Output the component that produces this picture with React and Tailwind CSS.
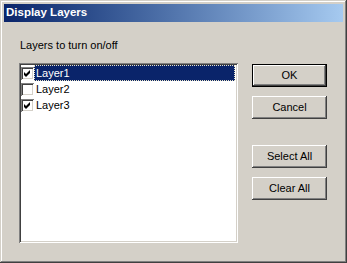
const layers = [
  { name: 'Layer1', checked: true, selected: true },
  { name: 'Layer2', checked: false },
  { name: 'Layer3', checked: true },
]

const raised =
  'shadow-[inset_-1px_-1px_#404040,inset_1px_1px_#ffffff,inset_-2px_-2px_#808080,inset_2px_2px_#d4d0c8]'

const Check = ({ checked }) => (
  <div className="w-[13px] h-[13px] shrink-0 bg-white shadow-[inset_1px_1px_#808080,inset_-1px_-1px_#ffffff,inset_2px_2px_#404040,inset_-2px_-2px_#d4d0c8]">
    {checked && (
      <svg width="13" height="13" viewBox="0 0 13 13" className="block">
        <path d="M3 5 L5 7 L9 3 L9 6 L5 10 L3 8 Z" fill="#000" />
      </svg>
    )}
  </div>
)

const Button = ({ label, isDefault, className = '' }) => (
  <button
    className={`block w-[75px] h-[23px] bg-[#d4d0c8] text-[11px] leading-none text-black ${
      isDefault ? 'border border-black' : ''
    } ${className}`}
  >
    <span className={`flex items-center justify-center w-full h-full ${raised}`}>{label}</span>
  </button>
)

export default function App() {
  return (
    <div
      className="w-[347px] h-[263px] bg-[#d4d0c8] flex flex-col p-[4px] shadow-[inset_-1px_-1px_#404040,inset_1px_1px_#d4d0c8,inset_-2px_-2px_#808080,inset_2px_2px_#ffffff]"
      style={{ fontFamily: '"Liberation Sans", Arial, sans-serif' }}
    >
      {/* Title bar */}
      <div className="h-[18px] bg-gradient-to-r from-[#0a246a] to-[#a6caf0] flex items-center pl-[2px]">
        <span className="text-white font-bold text-[11.5px] leading-none">Display Layers</span>
      </div>

      {/* Body */}
      <div className="flex pl-[15px] pt-[17px]">
        <div className="flex flex-col">
          <div className="text-[11px] leading-[13px] text-black pl-[1px]">Layers to turn on/off</div>
          <div className="mt-[11px] w-[219px] h-[180px] bg-white p-[2px] shadow-[inset_1px_1px_#808080,inset_-1px_-1px_#ffffff,inset_2px_2px_#404040,inset_-2px_-2px_#d4d0c8]">
            {layers.map((l) => (
              <div key={l.name} className="flex items-center h-[16px]">
                <Check checked={l.checked} />
                <div
                  className={`flex-1 h-full flex items-center pl-[1px] mr-[1px] text-[11px] ${
                    l.selected
                      ? 'bg-[#0a246a] text-white border border-dotted border-[#e8e4c8]'
                      : 'text-black border border-transparent'
                  }`}
                >
                  {l.name}
                </div>
              </div>
            ))}
          </div>
        </div>

        <div className="flex flex-col ml-[14px] pt-[25px]">
          <Button label="OK" isDefault />
          <Button label="Cancel" className="mt-[9px]" />
          <Button label="Select All" className="mt-[26px]" />
          <Button label="Clear All" className="mt-[9px]" />
        </div>
      </div>
    </div>
  )
}
